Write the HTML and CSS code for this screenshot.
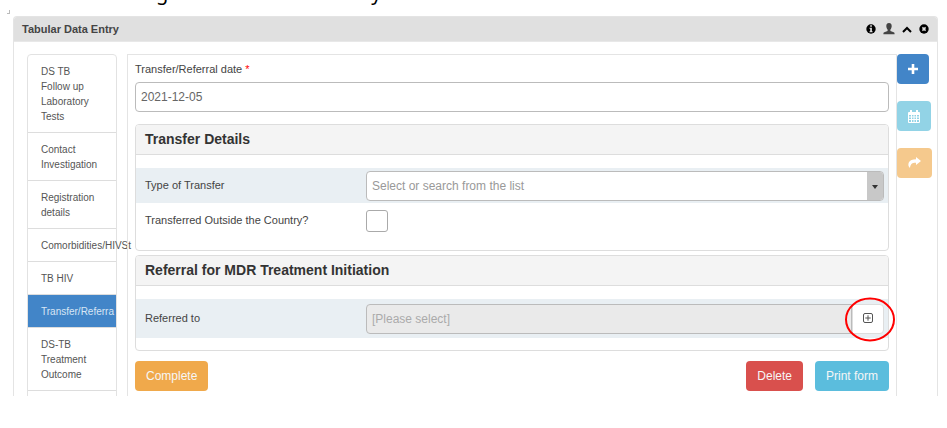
FILE: index.html
```html
<!DOCTYPE html>
<html lang="en">
<head>
<meta charset="utf-8">
<title>Tabular Data Entry</title>
<link rel="stylesheet" href="styles.css">
</head>
<body>
<div class="page-line"><span class="letter first">g</span><span class="letter second">y</span></div>
<div class="corner"></div>
<section class="widget">
  <header class="widget-header">
    <h1 class="widget-title">Tabular Data Entry</h1>
    <div class="tools">
      <button class="tool" type="button" aria-label="Information"><svg width="10" height="10" viewBox="0 0 10 10"><circle cx="5" cy="5" r="4.7"/><path fill="#e0e0e0" d="M4.2 1.3h1.7v1.4H4.2zM3.5 3.7h2.4v3.5h.7v1.1H3.5V7.2h.7V4.8h-.7z"/></svg></button>
      <button class="tool person" type="button" aria-label="Profile"><svg width="12" height="12" viewBox="0 0 12 12"><path d="M6 0C4.200 0 3.300 1.200 3.300 3c0 1.600.6 2.800 1.300 3.600V8L1.300 9.300C.6 9.600.4 10 .4 11.200h11.200c0-1.200-.2-1.600-.9-1.900L7.400 8V6.600C8.100 5.800 8.700 4.600 8.700 3 8.700 1.200 7.800 0 6 0z"/></svg></button>
      <button class="tool" type="button" aria-label="Collapse"><svg width="10" height="10" viewBox="0 0 10 10"><path d="M1 8l4-4 4 4" fill="none" stroke="#000" stroke-width="2"/></svg></button>
      <button class="tool" type="button" aria-label="Close"><svg width="10" height="10" viewBox="0 0 10 10"><circle cx="5" cy="5" r="4.700"/><path d="M3.400 3.400l3.200 3.200M6.600 3.400L3.400 6.600" stroke="#e0e0e0" stroke-width="1.500"/></svg></button>
    </div>
  </header>
  <div class="widget-body">
    <nav class="stages">
      <a class="stage" href="#">DS TB<br>Follow up Laboratory Tests</a>
      <a class="stage" href="#">Contact Investigation</a>
      <a class="stage" href="#">Registration details</a>
      <a class="stage" href="#">Comorbidities/HIVSt</a>
      <a class="stage" href="#">TB HIV</a>
      <a class="stage active" href="#">Transfer/Referra</a>
      <a class="stage" href="#">DS-TB Treatment Outcome</a>
      <a class="stage" href="#" aria-label="Next stage"></a>
    </nav>
    <form class="entry">
      <label class="date-label" for="date">Transfer/Referral date <span class="required">*</span></label>
      <input class="control" id="date" type="text" value="2021-12-05">
      <section class="panel">
        <h2 class="panel-title">Transfer Details</h2>
        <div class="panel-body">
          <div class="row shaded">
            <label for="type">Type of Transfer</label>
            <div class="select-wrap">
              <select class="control" id="type"><option>Select or search from the list</option></select>
              <span class="select-arrow"></span>
            </div>
          </div>
          <div class="row">
            <label for="outside">Transferred Outside the Country?</label>
            <input class="check" id="outside" type="checkbox">
          </div>
        </div>
      </section>
      <section class="panel">
        <h2 class="panel-title">Referral for MDR Treatment Initiation</h2>
        <div class="panel-body">
          <div class="row shaded tall">
            <label for="referred">Referred to</label>
            <div class="picker">
              <input class="control" id="referred" type="text" placeholder="[Please select]" disabled>
              <button class="picker-button" type="button" aria-label="Choose unit"><svg width="10" height="10" viewBox="0 0 10 10" fill="none" stroke="#555"><rect x=".5" y=".5" width="9" height="9" rx="1.500"/><path d="M5 2.300v5.400M2.300 5h5.400"/></svg></button>
              <svg class="ring" width="50" height="45" viewBox="0 0 50 45"><ellipse cx="25" cy="22.500" rx="24" ry="21" fill="none" stroke="#f00" stroke-width="2"/></svg>
            </div>
          </div>
        </div>
      </section>
      <div class="actions">
        <button class="button complete" type="button">Complete</button>
        <button class="button delete" type="button">Delete</button>
        <button class="button print" type="button">Print form</button>
      </div>
    </form>
    <aside class="side">
      <button class="side-button add" type="button" aria-label="Add"><svg width="10" height="10" viewBox="0 0 10 10"><path d="M3.700 0h2.600v3.700H10v2.600H6.300V10H3.700V6.300H0V3.700h3.700z"/></svg></button>
      <button class="side-button schedule" type="button" aria-label="Schedule"><svg width="12" height="13" viewBox="0 0 12 13"><path d="M2 0h2v3H2zM8 0h2v3H8z"/><path fill-rule="evenodd" d="M1 2h10q1 0 1 1v9q0 1-1 1H1q-1 0-1-1V3q0-1 1-1zM1 5v1.500h2V5zm3 0v1.500h1.500V5zm2.500 0v1.500H8V5zM9 5v1.500h2V5zM1 7.500V9h2V7.500zm3 0V9h1.500V7.500zm2.500 0V9H8V7.500zm2.500 0V9h2V7.500zM1 10v2h2v-2zm3 0v2h1.500v-2zm2.500 0v2H8v-2zm2.500 0v2h2v-2z"/></svg></button>
      <button class="side-button refer" type="button" aria-label="Refer"><svg width="13" height="12" viewBox="0 0 13 12"><path d="M8 0l5 4-5 4V5.700C4.500 5.600 2.500 6.500 2 11 .2 9.800 0 7.500.8 5.600 2 3 4.500 2.300 8 2.300z"/></svg></button>
    </aside>
  </div>
</section>
</body>
</html>
```
FILE: styles.css
```css
* { box-sizing: border-box; }
body {
  margin: 0;
  background: #fff;
  color: #444;
  font: 11px/15px "Liberation Sans", Arial, sans-serif;
}
button, input, select { font-family: inherit; }
h1, h2 { margin: 0; }

.page-line {
  display: flex;
  height: 10px;
  padding-left: 156px;
  overflow: hidden;
  color: #000;
  font: 20px/20px "Noto Sans", "Open Sans", sans-serif;
}
.letter { margin-top: -17px; }
.second { margin-left: 203px; }
.corner {
  width: 3px;
  height: 4px;
  margin-left: 7px;
  border: solid #bbb;
  border-width: 0 1px 1px 0;
}

.widget {
  height: 380px;
  margin: 2px 9px 0 13px;
  border: 1px solid #e4e4e4;
  border-bottom: 0;
  border-radius: 4px 4px 0 0;
  overflow: hidden;
}
.widget-header {
  display: flex;
  align-items: center;
  justify-content: space-between;
  height: 25px;
  padding: 0 8px;
  border-bottom: 1px solid #e8e8e8;
  background: #e0e0e0;
}
.widget-title { font-size: 11px; line-height: 15px; }
.tools { display: flex; align-items: center; gap: 7px; }
.tool { display: flex; padding: 0; border: 0; background: none; }
.person { fill: #444; }
.widget-body { display: flex; padding: 12px 8px 0 13px; }

.stages {
  flex: none;
  width: 90px;
  border: 1px solid #e2e2e2;
  border-radius: 4px 4px 0 0;
}
.stage {
  display: block;
  padding: 9px 13px 8px;
  border-bottom: 1px solid #ddd;
  color: #555;
  font-size: 10px;
  line-height: 15px;
  text-decoration: none;
}
.active { background: #4285c8; color: #d8e6f4; }

.entry {
  flex: 1;
  min-width: 0;
  height: 360px;
  margin-left: 10px;
  padding: 7px 7px 0;
  border: 1px solid #e4e4e4;
}
.date-label { display: block; margin-bottom: 5px; }
.required { color: #f00; }
.control {
  display: block;
  width: 100%;
  height: 30px;
  padding: 0 5px;
  border: 1px solid #bbb;
  border-radius: 4px;
  background: #fff;
  color: #666;
  font-size: 12px;
}
.panel {
  margin-top: 12px;
  border: 1px solid #ddd;
  border-radius: 4px;
}
.panel + .panel { margin-top: 4px; }
.panel-title {
  height: 30px;
  padding: 0 9px;
  border-bottom: 1px solid #ddd;
  border-radius: 3px 3px 0 0;
  background: #f4f4f4;
  color: #333;
  font-size: 14px;
  line-height: 28px;
}
.panel-body { padding: 13px 0 12px; }
.row {
  display: grid;
  grid-template-columns: 221px 1fr;
  align-items: center;
  height: 35px;
  padding: 0 4px 0 9px;
}
.shaded { background: #e9eff3; }
.tall { height: 39px; }
.select-wrap, .picker { position: relative; }
.select-wrap .control { appearance: none; color: #999; }
.select-arrow {
  position: absolute;
  top: 1px;
  right: 1px;
  width: 16px;
  height: 28px;
  border-radius: 0 3px 3px 0;
  background: #c8c8c8;
  pointer-events: none;
}
.select-arrow::after {
  content: "";
  position: absolute;
  top: 13px;
  left: 5px;
  border: 3px solid transparent;
  border-top: 4px solid #333;
}
.check {
  appearance: none;
  width: 22px;
  height: 22px;
  margin: 0;
  border: 1px solid #aaa;
  border-radius: 3px;
  background: #fff;
}
.picker { display: flex; }
.picker .control { flex: 1; border-radius: 4px 0 0 4px; background: #eaeaea; }
.picker .control::placeholder { color: #aaa; }
.picker-button {
  width: 32px;
  height: 30px;
  padding: 0;
  border: 1px solid #ddd;
  border-radius: 0 4px 4px 0;
  background: #fff;
}
.ring { position: absolute; top: -7px; right: -11px; pointer-events: none; }

.actions { display: flex; gap: 12px; margin-top: 10px; }
.button {
  height: 30px;
  padding: 0 11px;
  border: 0;
  border-radius: 4px;
  color: #f6f6f6;
  font-size: 12px;
}
.complete { margin-right: auto; background: #f0a94b; }
.delete { background: #d9504d; }
.print { background: #5bbddd; }

.side { display: flex; flex: none; flex-direction: column; gap: 17px; width: 32px; }
.side-button {
  display: flex;
  align-items: center;
  justify-content: center;
  width: 32px;
  height: 30px;
  padding: 0;
  border: 0;
  border-radius: 4px;
  fill: #fff;
}
.add { background: #4285c8; }
.schedule { width: 34px; background: #92d3e6; }
.refer { width: 35px; background: #f5c98d; }
```
